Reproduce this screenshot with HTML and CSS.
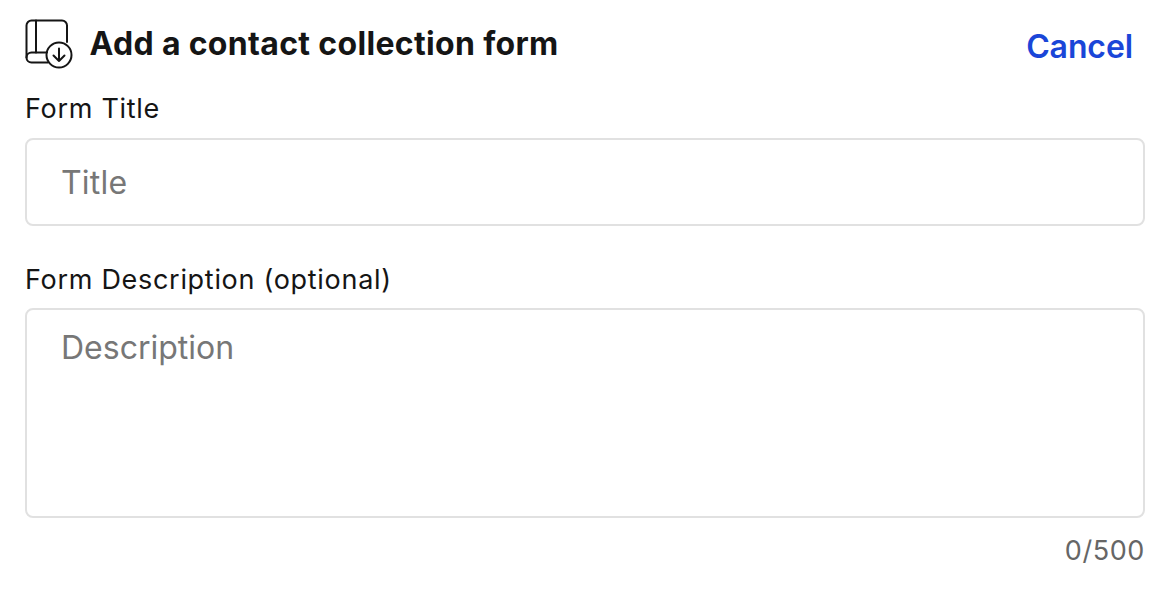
FILE: index.html
```html
<!DOCTYPE html>
<html lang="en">
<head>
<meta charset="utf-8">
<title>Add a contact collection form</title>
<link rel="stylesheet" href="styles.css">
</head>
<body>
<main class="panel">
  <header class="head">
    <div class="head-left">
      <svg class="icon" width="50" height="50" viewBox="0 0 50 50" fill="none" stroke="#151515" stroke-width="2" stroke-linecap="round" stroke-linejoin="round">
        <path d="M1.500 38.500V6.500a5 5 0 0 1 5-5H37a5 5 0 0 1 5 5V23"/>
        <path d="M11 1.500V33.500"/>
        <path d="M22 33.500H6.500a5 5 0 0 0 0 10H23"/>
        <circle cx="34" cy="36" r="12.500"/>
        <path d="M34 29.500V42M28.500 36.500L34 42l5.500-5.500"/>
      </svg>
      <h1 class="title">Add a contact collection form</h1>
    </div>
    <a class="cancel" href="#">Cancel</a>
  </header>
  <label class="label label-first" for="t">Form Title</label>
  <input class="field" id="t" type="text" placeholder="Title">
  <label class="label label-second" for="d">Form Description (optional)</label>
  <textarea class="field area" id="d" placeholder="Description"></textarea>
  <div class="count">0/500</div>
</main>
</body>
</html>
```

FILE: styles.css
```css
* { box-sizing: border-box; }
html, body { margin: 0; background: #fff; }
body { width: 1168px; height: 594px; overflow: hidden; font-family: Inter, "Liberation Sans", sans-serif; color: #151515; }
.panel { display: flex; flex-direction: column; padding: 19px 23px 0 25px; }
.head { display: flex; justify-content: space-between; align-items: flex-start; height: 76px; }
.head-left { display: flex; align-items: flex-start; gap: 14.5px; }
.icon { display: block; flex: none; }
.title { margin: 5px 0 0; font-size: 32px; line-height: 40px; font-weight: 700; letter-spacing: 0.33px; }
.cancel { margin: 8px 12px 0 0; font-size: 32px; line-height: 40px; font-weight: 600; color: #1a46d8; text-decoration: none; letter-spacing: -0.1px; }
.label { font-size: 27px; line-height: 32px; letter-spacing: 0.7px; }
.label-first { margin-top: -2px; padding-bottom: 1px; }
.label-second { margin-top: 38px; }
.field { display: block; width: 100%; border: 2px solid #e1e1e1; border-radius: 8px; background: #fff; font-family: inherit; font-size: 32px; color: #151515; outline: none; }
input.field { height: 88px; margin-top: 12px; padding: 0 34px; letter-spacing: 0.2px; }
.area { height: 210px; margin-top: 12px; padding: 18px 34px; resize: none; }
.field::placeholder { color: #777; opacity: 1; }
.count { margin-top: 17px; text-align: right; font-size: 27px; line-height: 32px; letter-spacing: 0.6px; color: #666; }
```
